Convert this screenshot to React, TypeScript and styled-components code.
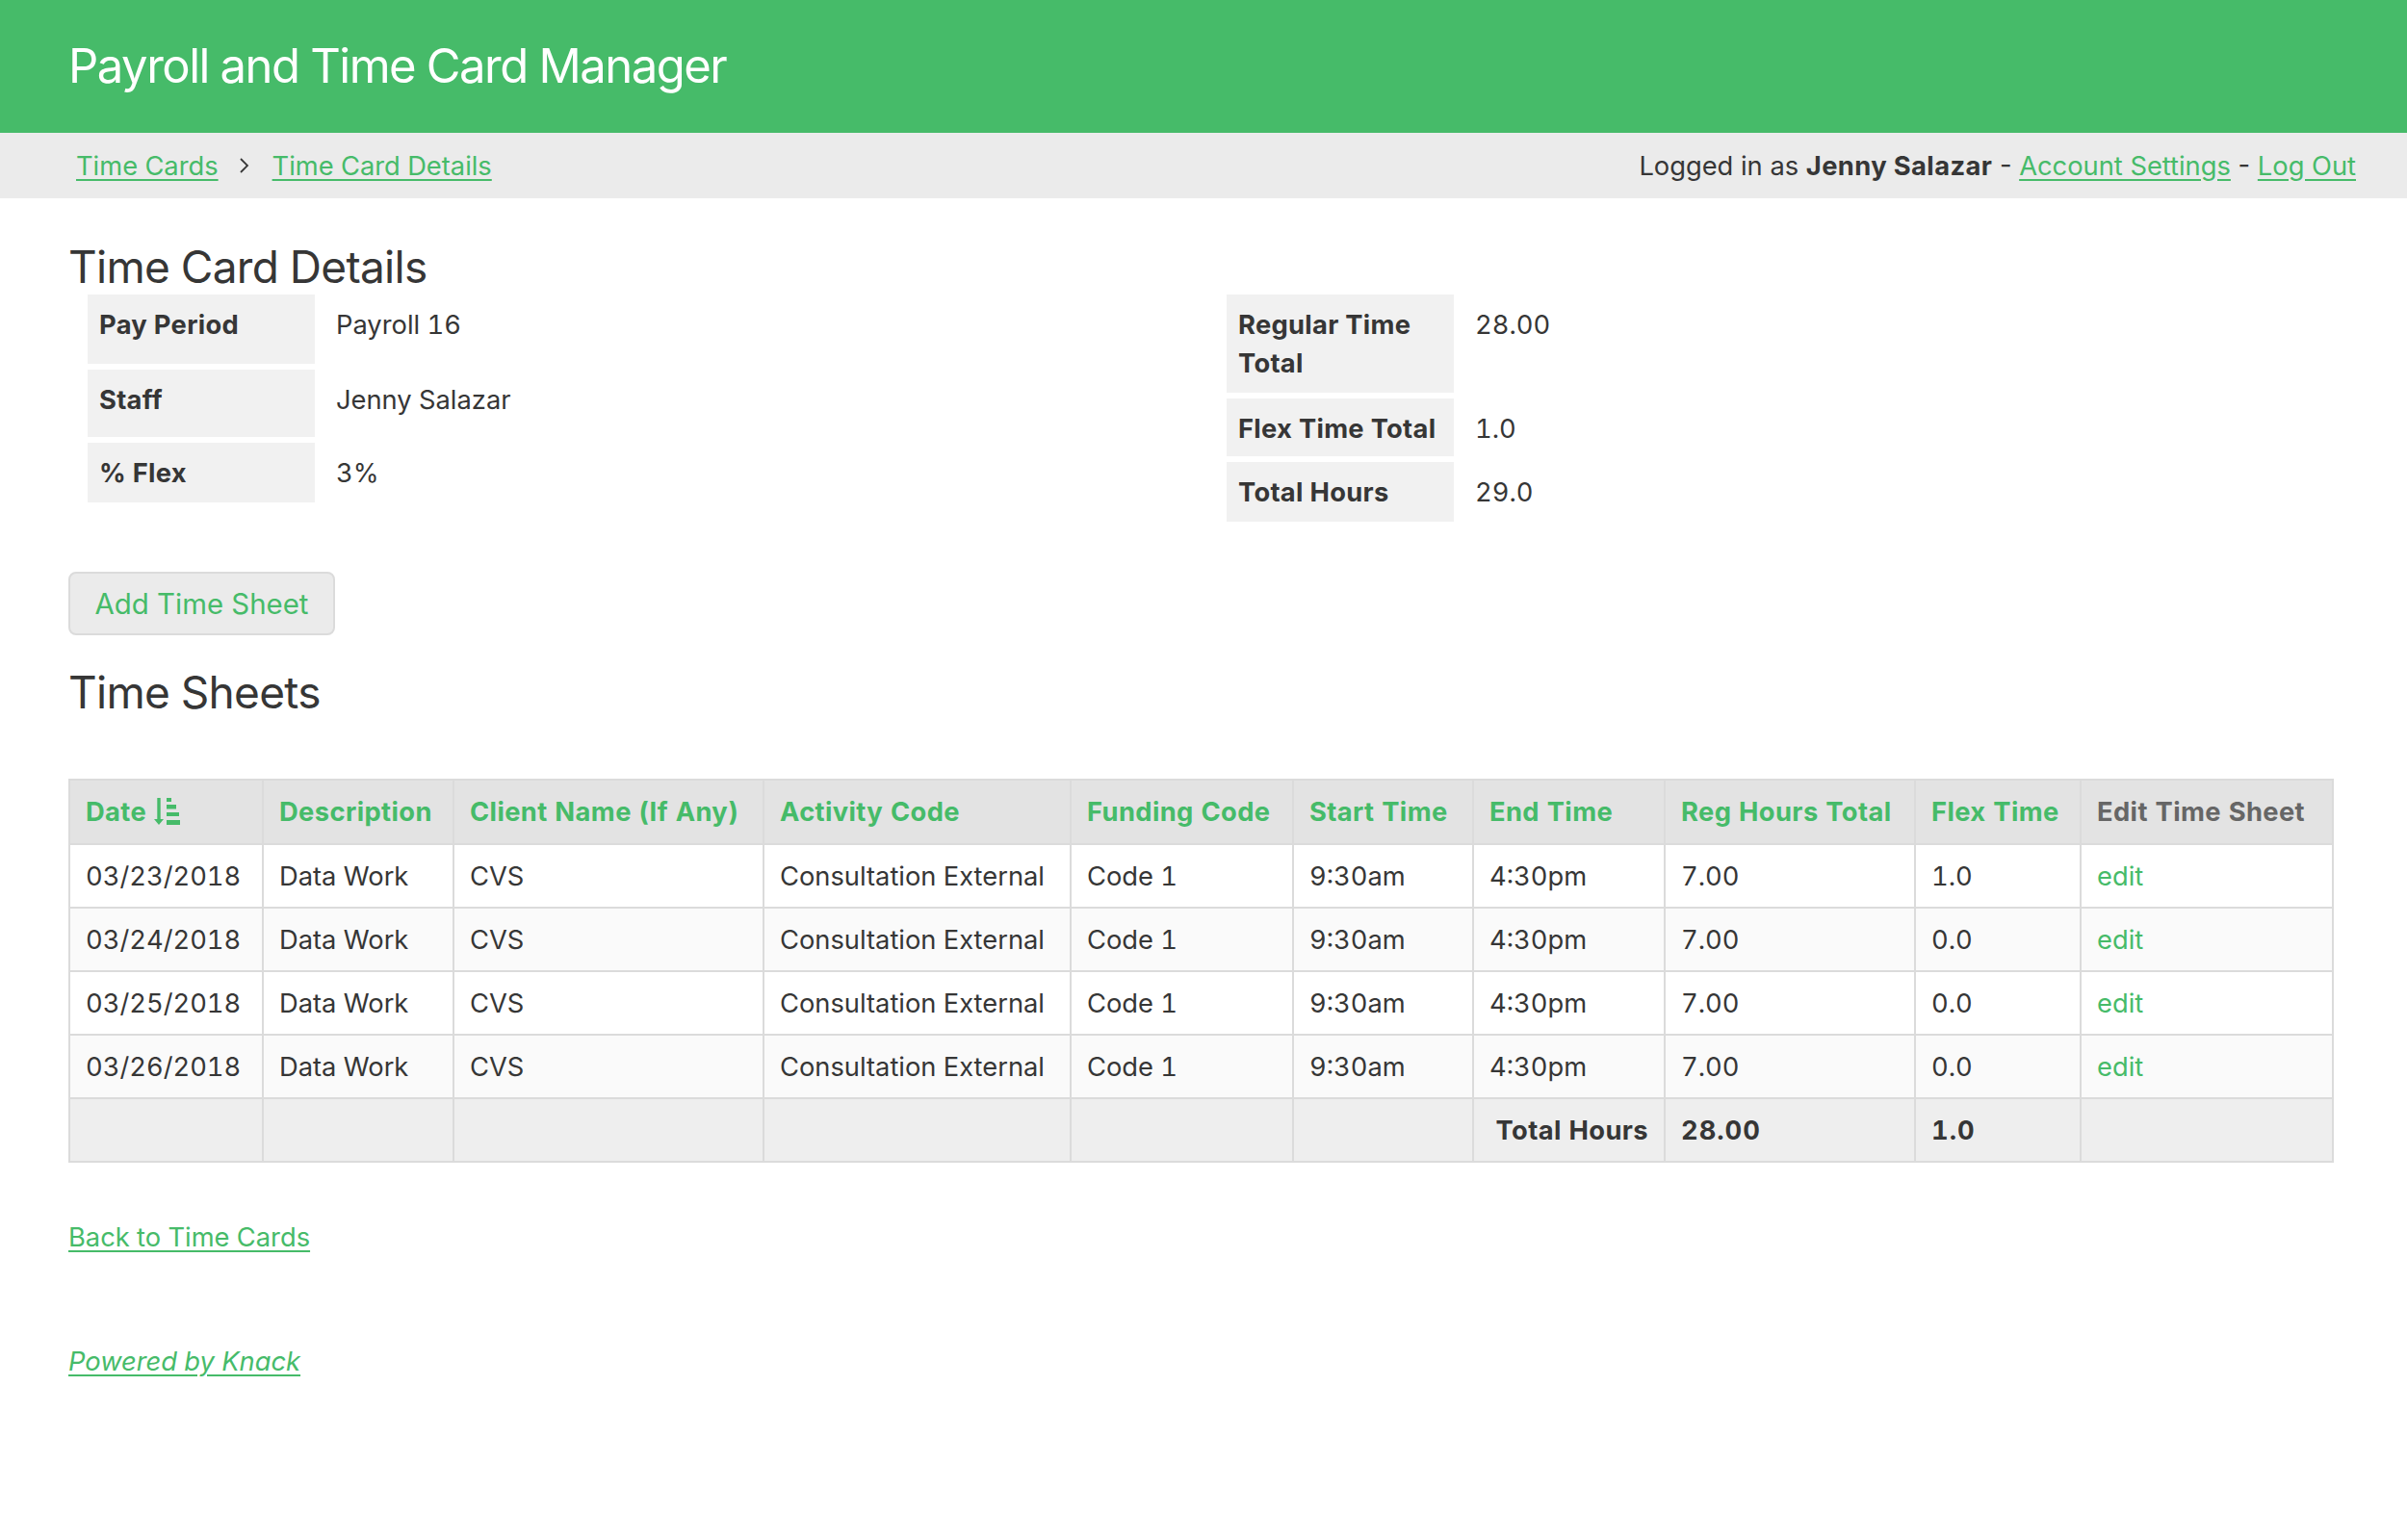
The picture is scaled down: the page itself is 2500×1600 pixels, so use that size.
import React from "react";
import styled, { createGlobalStyle } from "styled-components";

const GREEN = "#46bb69";
const INK = "#363636";

const Global = createGlobalStyle`
  html, body { margin: 0; padding: 0; background: #fff; }
  body {
    font-family: Inter, "Liberation Sans", sans-serif;
    color: ${INK};
    font-size: 27.3px;
    font-variant-numeric: tabular-nums;
  }
  * { box-sizing: border-box; }
`;

const Page = styled.div`
  width: 2500px;
  min-height: 1600px;
  display: flex;
  flex-direction: column;
`;
const Banner = styled.header`
  height: 138px;
  background: ${GREEN};
  display: flex;
  align-items: center;
  padding: 0 0 2px 71px;
`;
const Title = styled.h1`
  margin: 0;
  color: #fff;
  font-size: 49px;
  font-weight: 400;
  letter-spacing: -1.5px;
`;
const NavBar = styled.nav`
  height: 68px;
  background: #ebebeb;
  display: flex;
  align-items: center;
  justify-content: space-between;
  padding: 0 53px 0 79px;
`;
const Crumbs = styled.div`
  display: flex;
  align-items: center;
  gap: 17px;
`;
const Chevron = styled.svg`
  width: 22px;
  height: 22px;
  fill: none;
  stroke: ${INK};
  stroke-width: 1.8;
`;
const TextLink = styled.a`
  color: ${GREEN};
  text-decoration: underline;
  text-underline-offset: 4px;
`;
const UserInfo = styled.div`
  font-variant-numeric: normal;
`;
const Strong = styled.b`
  font-weight: 700;
  letter-spacing: 0.4px;
`;
const Main = styled.main`
  padding: 0 77px 0 71px;
  display: flex;
  flex-direction: column;
`;
const Heading = styled.h2<{ $top: number; $bottom: number }>`
  margin: ${(p) => p.$top}px 0 ${(p) => p.$bottom}px;
  font-size: 46px;
  line-height: 58px;
  font-weight: 400;
  letter-spacing: -0.7px;
`;
const Details = styled.section`
  display: grid;
  grid-template-columns: 1183px 1fr;
  padding-left: 20px;
`;
const DetailList = styled.div`
  display: flex;
  flex-direction: column;
  gap: 6px;
`;
const DetailRow = styled.div<{ $h: number }>`
  display: flex;
  height: ${(p) => p.$h}px;
`;
const DetailLabel = styled.div`
  width: 236px;
  background: #f1f1f1;
  padding: 12px 11px 0 12px;
  line-height: 40px;
  font-weight: 700;
  font-variant-numeric: normal;
  letter-spacing: 0.3px;
`;
const DetailValue = styled.div`
  padding: 12px 0 0 22px;
  line-height: 40px;
`;
const AddButton = styled.button`
  align-self: flex-start;
  margin-top: 52px;
  width: 277px;
  height: 66px;
  background: #ebebeb;
  border: 2px solid #dbdbdb;
  border-radius: 8px;
  color: ${GREEN};
  font: 400 29.4px Inter, sans-serif;
  padding: 0;
`;
const Table = styled.table`
  width: 2351px;
  table-layout: fixed;
  border-collapse: collapse;
  border: 2px solid #dbdbdb;
`;
const HeadCell = styled.th<{ $plain?: boolean }>`
  height: 67px;
  padding: 0 16px;
  background: #e3e3e3;
  border: 2px solid #dbdbdb;
  text-align: left;
  font-weight: 700;
  letter-spacing: 0.4px;
  color: ${(p) => (p.$plain ? "#666" : GREEN)};
  white-space: nowrap;
`;
const Cell = styled.td`
  height: 66px;
  padding: 0 16px;
  border: 2px solid #dbdbdb;
  white-space: nowrap;
`;
const Row = styled.tr<{ $alt?: boolean }>`
  background: ${(p) => (p.$alt ? "#fafafa" : "#fff")};
`;
const TotalRow = styled.tr`
  background: #eee;
`;
const TotalCell = styled(Cell)<{ $right?: boolean }>`
  font-weight: 700;
  letter-spacing: ${(p) => (p.$right ? 0.4 : 1)}px;
  text-align: ${(p) => (p.$right ? "right" : "left")};
`;
const EditLink = styled.a`
  color: ${GREEN};
`;
const SortIcon = styled.svg`
  width: 28px;
  height: 28px;
  margin-left: 8px;
  vertical-align: -4px;
  fill: ${GREEN};
`;
const Footer = styled.div<{ $top: number }>`
  margin-top: ${(p) => p.$top}px;
  line-height: 40px;
`;
const Italic = styled(TextLink)`
  font-style: italic;
`;
const Column = styled.col<{ $w: number }>`
  width: ${(p) => p.$w}px;
`;

const widths = [201, 198, 322, 319, 231, 187, 199, 260, 172, 262];
const dates = ["03/23/2018", "03/24/2018", "03/25/2018", "03/26/2018"];

export default function App() {
  return (
    <Page>
      <Global />
      <Banner>
        <Title>Payroll and Time Card Manager</Title>
      </Banner>
      <NavBar>
        <Crumbs>
          <TextLink>Time Cards</TextLink>
          <Chevron viewBox="0 0 22 22">
            <path d="M6 4l7 7-7 7" />
          </Chevron>
          <TextLink>Time Card Details</TextLink>
        </Crumbs>
        <UserInfo>
          Logged in as <Strong>Jenny Salazar</Strong> - <TextLink>Account Settings</TextLink> - <TextLink>Log Out</TextLink>
        </UserInfo>
      </NavBar>
      <Main>
        <Heading $top={42} $bottom={0}>Time Card Details</Heading>
        <Details>
          <DetailList>
            <DetailRow $h={72}>
              <DetailLabel>Pay Period</DetailLabel>
              <DetailValue>Payroll 16</DetailValue>
            </DetailRow>
            <DetailRow $h={70}>
              <DetailLabel>Staff</DetailLabel>
              <DetailValue>Jenny Salazar</DetailValue>
            </DetailRow>
            <DetailRow $h={62}>
              <DetailLabel>% Flex</DetailLabel>
              <DetailValue>3%</DetailValue>
            </DetailRow>
          </DetailList>
          <DetailList>
            <DetailRow $h={102}>
              <DetailLabel>Regular Time Total</DetailLabel>
              <DetailValue>28.00</DetailValue>
            </DetailRow>
            <DetailRow $h={60}>
              <DetailLabel>Flex Time Total</DetailLabel>
              <DetailValue>1.0</DetailValue>
            </DetailRow>
            <DetailRow $h={62}>
              <DetailLabel>Total Hours</DetailLabel>
              <DetailValue>29.0</DetailValue>
            </DetailRow>
          </DetailList>
        </Details>
        <AddButton>Add Time Sheet</AddButton>
        <Heading $top={30} $bottom={61}>Time Sheets</Heading>
        <Table>
          <colgroup>
            {widths.map((w, i) => (
              <Column key={i} $w={w} />
            ))}
          </colgroup>
          <thead>
            <tr>
              <HeadCell>
                Date
                <SortIcon viewBox="0 0 28 28">
                  <path d="M3.300 0h3.400v22H10L5 28 0 22h3.300z" />
                  <path d="M13 0h5v4h-5zM13 7h10v4.500H13zM13 15h13v4H13zM13 23h14v5H13z" />
                </SortIcon>
              </HeadCell>
              <HeadCell>Description</HeadCell>
              <HeadCell>Client Name (If Any)</HeadCell>
              <HeadCell>Activity Code</HeadCell>
              <HeadCell>Funding Code</HeadCell>
              <HeadCell>Start Time</HeadCell>
              <HeadCell>End Time</HeadCell>
              <HeadCell>Reg Hours Total</HeadCell>
              <HeadCell>Flex Time</HeadCell>
              <HeadCell $plain>Edit Time Sheet</HeadCell>
            </tr>
          </thead>
          <tbody>
            {dates.map((d, i) => (
              <Row key={d} $alt={i % 2 === 1}>
                <Cell>{d}</Cell>
                <Cell>Data Work</Cell>
                <Cell>CVS</Cell>
                <Cell>Consultation External</Cell>
                <Cell>Code 1</Cell>
                <Cell>9:30am</Cell>
                <Cell>4:30pm</Cell>
                <Cell>7.00</Cell>
                <Cell>{i === 0 ? "1.0" : "0.0"}</Cell>
                <Cell>
                  <EditLink>edit</EditLink>
                </Cell>
              </Row>
            ))}
            <TotalRow>
              <Cell />
              <Cell />
              <Cell />
              <Cell />
              <Cell />
              <Cell />
              <TotalCell $right>Total Hours</TotalCell>
              <TotalCell>28.00</TotalCell>
              <TotalCell>1.0</TotalCell>
              <Cell />
            </TotalRow>
          </tbody>
        </Table>
        <Footer $top={58}>
          <TextLink>Back to Time Cards</TextLink>
        </Footer>
        <Footer $top={89}>
          <Italic>Powered by Knack</Italic>
        </Footer>
      </Main>
    </Page>
  );
}
